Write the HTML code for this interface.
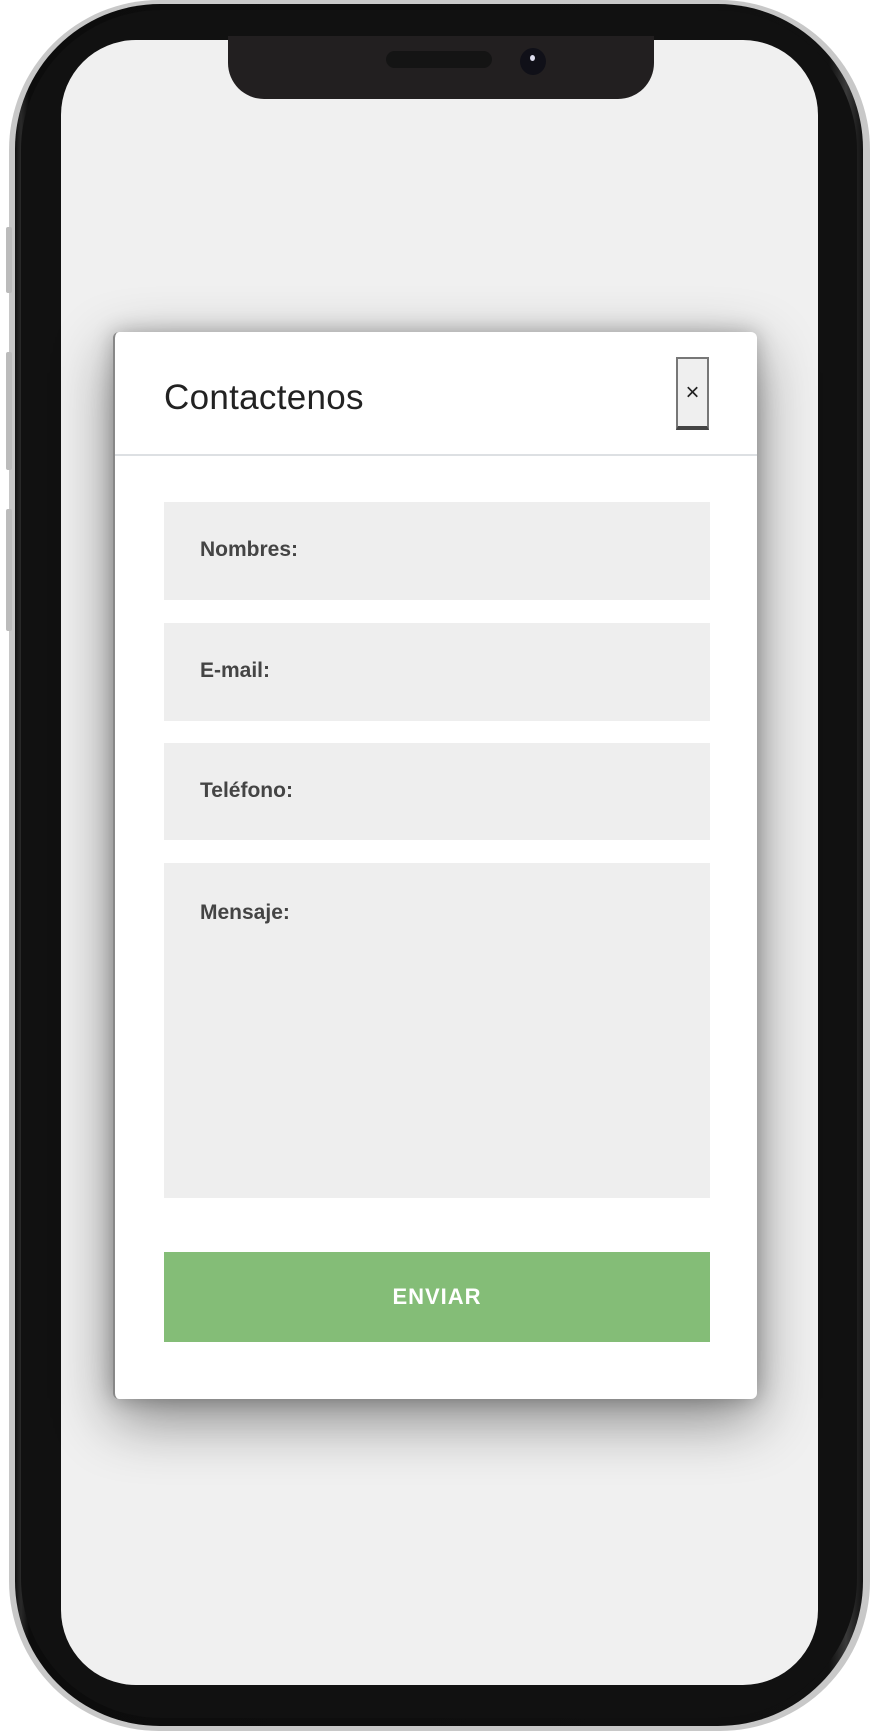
<!DOCTYPE html>
<html><head><meta charset="utf-8"><style>
*{margin:0;padding:0;box-sizing:border-box}
body{width:870px;height:1731px;background:#fff;position:relative;overflow:hidden;font-family:"Liberation Sans",sans-serif}
.silver{position:absolute;left:9px;top:0;width:861px;height:1731px;border-radius:150px;background:#c8c8c8}
.frame{position:absolute;left:15px;top:4px;width:848px;height:1722px;border-radius:145px;background:linear-gradient(90deg,#111 0,#2a2a2a 6px,#0c0c0c 14px,#111 96%,#3a3a3a 98%,#111 100%)}
.frame2{position:absolute;left:21px;top:10px;width:836px;height:1708px;border-radius:140px;background:#111}
.btn{position:absolute;left:6px;width:6px;background:#bbb;border-radius:2px}
.screen{position:absolute;left:61px;top:40px;width:757px;height:1645px;border-radius:75px;background:#f0f0f0;overflow:hidden}
.notch{position:absolute;left:228px;top:36px;width:426px;height:63px;background:#221f20;border-radius:0 0 36px 36px}
.spk{position:absolute;left:386px;top:51px;width:106px;height:17px;border-radius:9px;background:#141414}
.cam{position:absolute;left:520px;top:48px;width:26px;height:27px;border-radius:50%;background:#101018}
.cam i{position:absolute;left:10px;top:7px;width:5px;height:6px;border-radius:50%;background:#dde}
.modal{position:absolute;left:113px;top:332px;width:644px;height:1067px;background:#fff;border-radius:6px;box-shadow:0 20px 60px rgba(0,0,0,.45),0 0 20px rgba(0,0,0,.25);border-left:2px solid #888}
.title{position:absolute;left:49px;top:46px;font-size:35px;color:#222;letter-spacing:0.3px}
.close{position:absolute;left:561px;top:25px;width:33px;height:73px;background:#efefef;border:2px solid #777;border-bottom:4px solid #444;font-size:24px;text-align:center;line-height:68px;color:#222}
.hr{position:absolute;left:0;top:122px;width:642px;height:2px;background:#dde0e3}
.f{position:absolute;left:49px;width:546px;background:#eee}
.f span{position:absolute;left:36px;font-size:21px;font-weight:bold;color:#444}
.send{position:absolute;left:49px;top:920px;width:546px;height:90px;background:#84bd77;color:#fff;font-weight:bold;font-size:22px;text-align:center;line-height:90px;letter-spacing:1px}
</style></head><body>
<div class="silver"></div>
<div class="frame"></div>
<div class="frame2"></div>
<div class="btn" style="top:227px;height:66px"></div>
<div class="btn" style="top:352px;height:118px"></div>
<div class="btn" style="top:509px;height:122px"></div>
<div class="screen"></div>
<div class="notch"></div>
<div class="spk"></div>
<div class="cam"><i></i></div>
<div class="modal">
<div class="title">Contactenos</div>
<div class="close">×</div>
<div class="hr"></div>
<div class="f" style="top:170px;height:98px"><span style="top:36px">Nombres:</span></div>
<div class="f" style="top:291px;height:98px"><span style="top:36px">E-mail:</span></div>
<div class="f" style="top:411px;height:97px"><span style="top:36px">Teléfono:</span></div>
<div class="f" style="top:531px;height:335px"><span style="top:38px">Mensaje:</span></div>
<div class="send">ENVIAR</div>
</div>
</body></html>
